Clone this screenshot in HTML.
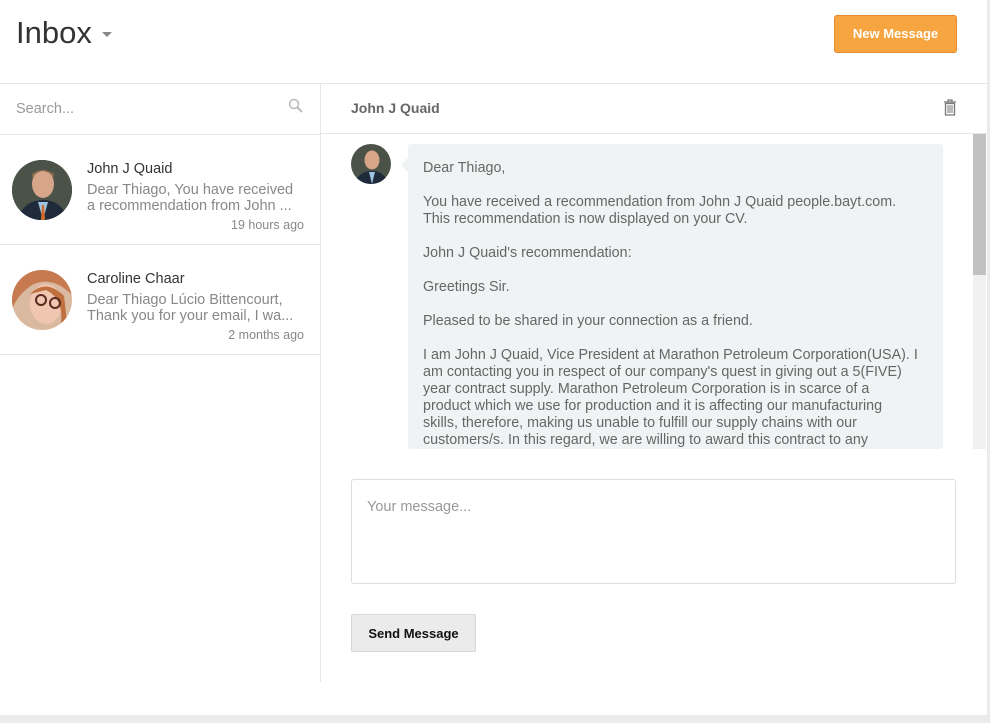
<!DOCTYPE html>
<html><head><meta charset="utf-8"><style>
*{box-sizing:border-box;margin:0;padding:0}
body{width:990px;height:723px;background:#ebebec;font-family:"Liberation Sans",sans-serif;color:#555;overflow:hidden;position:relative}
.panel{position:absolute;left:0;top:0;width:987px;height:715px;background:#fff}
.title{position:absolute;left:16px;top:15px;font-size:31px;color:#333}
.caret{position:absolute;left:102px;top:32px;border-left:5px solid transparent;border-right:5px solid transparent;border-top:5px solid #888}
.newbtn{position:absolute;left:834px;top:15px;width:123px;height:38px;background:#f6a541;border:1px solid #e88a2a;border-radius:3px;color:#fff;font-weight:bold;font-size:13px;text-align:center;line-height:36px}
.hline{position:absolute;left:0;top:83px;width:987px;height:1px;background:#e6e6e6}
.vline{position:absolute;left:320px;top:84px;width:1px;height:598px;background:#e6e6e6}
.search{position:absolute;left:16px;top:101px;font-size:14.5px;color:#999}
.l{position:absolute;left:0;width:320px;height:1px;background:#e6e6e6}
.av{position:absolute;border-radius:50%;overflow:hidden}
.name{position:absolute;left:87px;font-size:14.5px;color:#333}
.prev{position:absolute;left:87px;font-size:14.5px;color:#888;line-height:16px;width:215px}
.time{position:absolute;right:686px;font-size:12.5px;color:#888}
.hdr{position:absolute;left:351px;top:100px;font-size:14px;font-weight:bold;color:#666}
.l2{position:absolute;left:321px;top:133px;width:666px;height:1px;background:#e6e6e6}
.bubble{position:absolute;left:408px;top:144px;width:535px;height:305px;background:#f0f3f4;border-radius:3px;overflow:hidden;padding:16px 24px 0 15px;font-size:14.3px;line-height:17px;color:#666}
.bubble p{margin-bottom:17px}
.tri{position:absolute;left:401px;top:158px;border-top:7px solid transparent;border-bottom:7px solid transparent;border-right:7px solid #f0f3f4}
.sb{position:absolute;left:973px;top:134px;width:13px;height:315px;background:#f1f1f1}
.thumb{position:absolute;left:973px;top:134px;width:13px;height:141px;background:#c1c1c1}
.ta{position:absolute;left:351px;top:479px;width:605px;height:105px;border:1px solid #ddd;border-radius:3px;padding:19px 15px;font-size:14.5px;color:#999}
.send{position:absolute;left:351px;top:614px;width:125px;height:38px;background:#ebebeb;border:1px solid #d6d6d6;border-radius:2px;font-weight:bold;font-size:13px;color:#111;text-align:center;line-height:37px}
</style></head><body>
<div class="panel"></div>
<div class="title">Inbox</div><div class="caret"></div>
<div class="newbtn">New Message</div>
<div class="hline"></div>
<div class="vline"></div>
<div class="search">Search...</div>
<svg style="position:absolute;left:288px;top:98px" width="16" height="16" viewBox="0 0 16 16"><circle cx="6" cy="6" r="4.5" fill="none" stroke="#bbb" stroke-width="1.5"/><path d="M9.5 9.5L14 14" stroke="#bbb" stroke-width="2"/></svg>
<div class="l" style="top:134px"></div>
<div class="av" style="left:12px;top:160px;width:60px;height:60px;background:#3a4148"><svg width="60" height="60"><rect width="60" height="60" fill="#4b5248"/><ellipse cx="31" cy="24" rx="11" ry="14" fill="#d7a58a"/><path d="M20 18 Q31 4 42 18 L42 14 Q31 6 20 14Z" fill="#8a6a4a"/><path d="M5 60 Q12 40 31 40 Q50 40 56 60Z" fill="#1f2a3a"/><path d="M26 42 L31 60 L36 42Z" fill="#9fc3e0"/><path d="M30 45 L32 45 L33 60 L29 60Z" fill="#d66a2a"/></svg></div>
<div class="name" style="top:161px">John J Quaid</div>
<div class="prev" style="top:182px">Dear Thiago, You have received a recommendation from John ...</div>
<div class="time" style="top:218px">19 hours ago</div>
<div class="l" style="top:244px"></div>
<div class="av" style="left:12px;top:270px;width:60px;height:60px"><svg width="60" height="60"><rect width="60" height="60" fill="#d9b9a0"/><path d="M0 0H60V25Q40 5 20 15 Q5 25 0 40Z" fill="#c77a50"/><ellipse cx="34" cy="34" rx="16" ry="20" fill="#f0c6b0"/><path d="M18 24 Q34 8 52 26 L56 60 L48 60 Q54 30 34 20Z" fill="#c0703f"/><circle cx="29" cy="30" r="5" fill="none" stroke="#5a2a20" stroke-width="2"/><circle cx="43" cy="33" r="5" fill="none" stroke="#5a2a20" stroke-width="2"/></svg></div>
<div class="name" style="top:271px">Caroline Chaar</div>
<div class="prev" style="top:292px">Dear Thiago Lúcio Bittencourt, Thank you for your email, I wa...</div>
<div class="time" style="top:328px">2 months ago</div>
<div class="l" style="top:354px"></div>
<div class="hdr">John J Quaid</div>
<svg style="position:absolute;left:943px;top:99px" width="14" height="17" viewBox="0 0 14 17"><path d="M1 3H13M5 3V1H9V3M2.5 4.5H11.5V16H2.5Z" fill="none" stroke="#777" stroke-width="1.3"/><path d="M5 6V14M7 6V14M9 6V14" stroke="#777" stroke-width="1"/></svg>
<div class="l2"></div>
<div class="av" style="left:351px;top:144px;width:40px;height:40px"><svg width="40" height="40"><rect width="40" height="40" fill="#4b5248"/><ellipse cx="21" cy="16" rx="7.5" ry="9.5" fill="#d7a58a"/><path d="M3 40 Q8 27 21 27 Q34 27 37 40Z" fill="#1f2a3a"/><path d="M18 28 L21 40 L24 28Z" fill="#9fc3e0"/></svg></div>
<div class="tri"></div>
<div class="bubble">
<p>Dear Thiago,</p>
<p>You have received a recommendation from John J Quaid people.bayt.com. This recommendation is now displayed on your CV.</p>
<p>John J Quaid's recommendation:</p>
<p>Greetings Sir.</p>
<p>Pleased to be shared in your connection as a friend.</p>
<p>I am John J Quaid, Vice President at Marathon Petroleum Corporation(USA). I am contacting you in respect of our company's quest in giving out a 5(FIVE) year contract supply. Marathon Petroleum Corporation is in scarce of a product which we use for production and it is affecting our manufacturing skills, therefore, making us unable to fulfill our supply chains with our customers/s. In this regard, we are willing to award this contract to any</p>
</div>
<div class="sb"></div><div class="thumb"></div>
<div class="ta">Your message...</div>
<div class="send">Send Message</div>
</body></html>
